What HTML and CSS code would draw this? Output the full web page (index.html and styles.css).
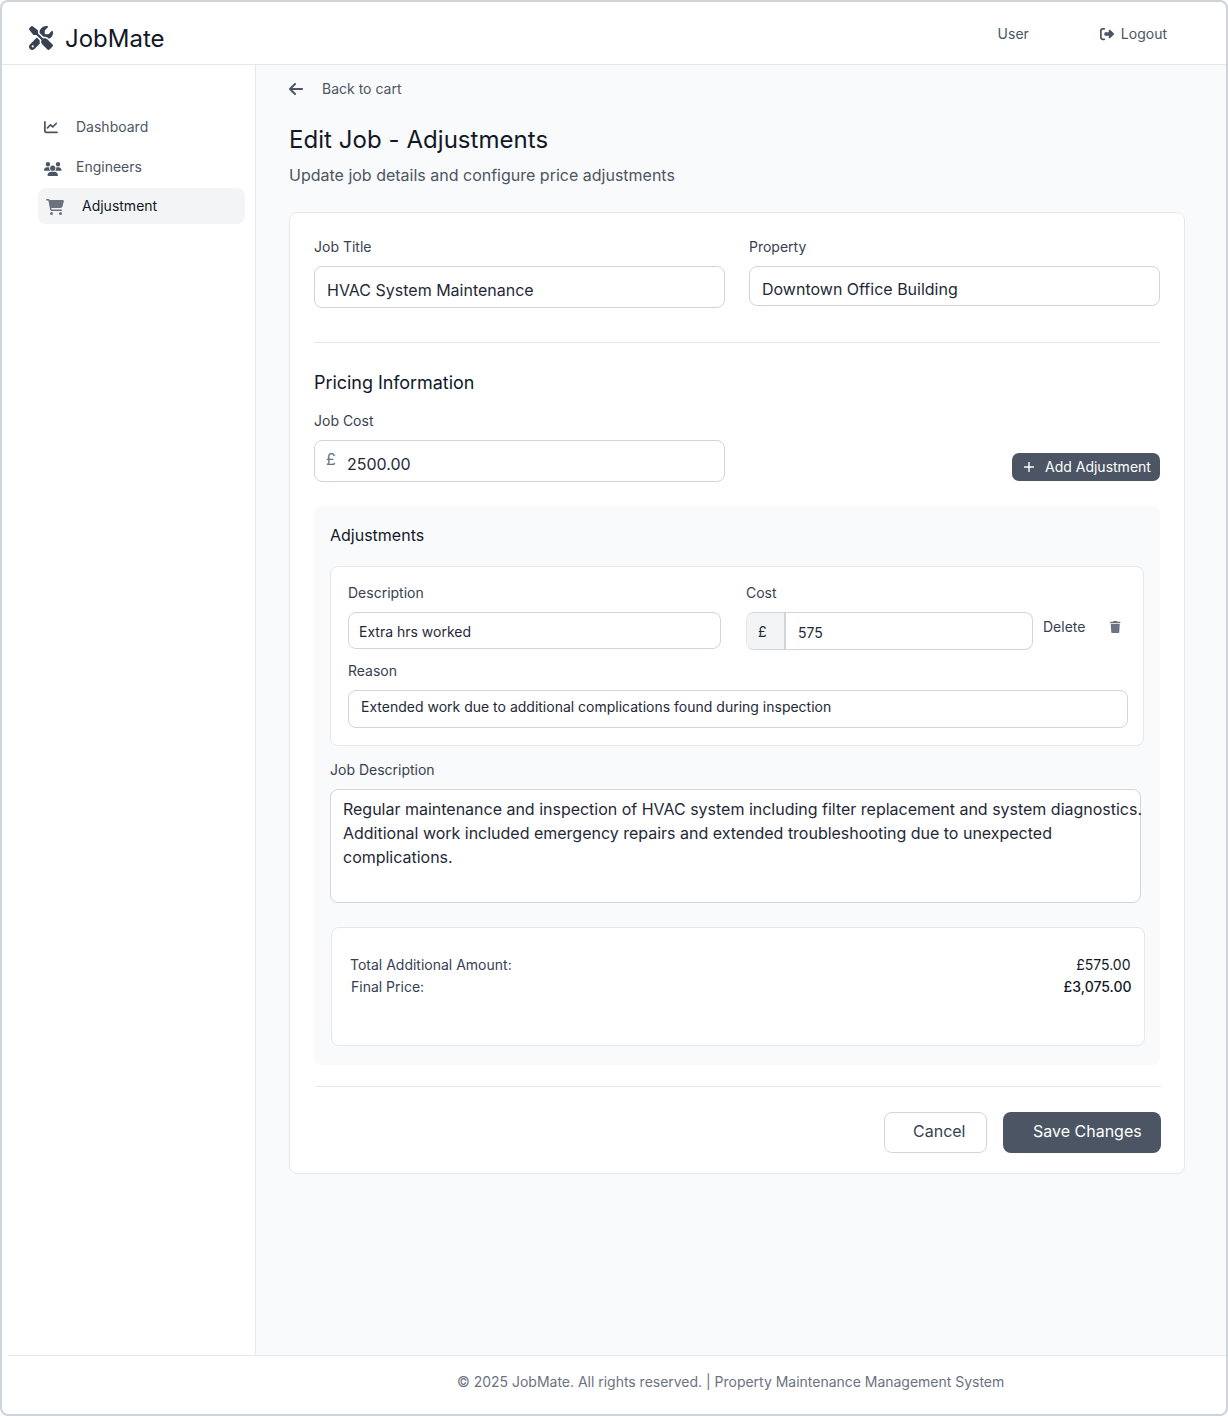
FILE: index.html
```html
<!DOCTYPE html>
<html lang="en">
<head>
<meta charset="utf-8">
<title>JobMate - Edit Job</title>
<link rel="stylesheet" href="styles.css">
</head>
<body>
<div class="app">
  <header class="header">
    <svg class="logo-icon" viewBox="0 0 512 512"><path d="M78.6 5C69.1-2.4 55.6-1.5 47 7L7 47c-8.5 8.5-9.4 22-2.1 31.6l80 104c4.5 5.9 11.6 9.4 19 9.4h54.1l109 109c-14.7 29-10 65.4 14.3 89.6l112 112c12.5 12.5 32.8 12.5 45.3 0l64-64c12.5-12.5 12.5-32.8 0-45.3l-112-112c-24.2-24.2-60.6-29-89.6-14.3l-109-109V104c0-7.5-3.5-14.5-9.4-19L78.6 5zM19.9 396.1C7.2 408.8 0 426.1 0 444.1C0 481.6 30.4 512 67.9 512c18 0 35.3-7.2 48-19.9L233.7 374.3c-7.8-20.9-9-43.6-3.6-65.1l-61.7-61.7L19.9 396.1zM512 144c0-10.5-1.1-20.7-3.2-30.5c-2.4-11.2-16.1-14.1-24.2-6l-63.9 63.9c-3 3-7.1 4.7-11.3 4.7H352c-8.8 0-16-7.2-16-16V102.6c0-4.2 1.7-8.3 4.7-11.3l63.9-63.9c8.1-8.1 5.2-21.8-6-24.2C388.7 1.1 378.5 0 368 0C288.5 0 224 64.5 224 144l0 .8 85.3 85.3c36-9.1 75.8 .5 104 28.7L429 274.5c49-23 83-72.8 83-130.5zM56 432a24 24 0 1 1 48 0 24 24 0 1 1 -48 0z"/></svg>
    <span class="logo-text">JobMate</span>
    <span class="user">User</span>
    <a class="logout">
      <svg class="logout-icon" viewBox="0 0 512 512"><path d="M377.9 105.9L500.7 228.7c7.2 7.2 11.3 17.1 11.3 27.3s-4.1 20.1-11.3 27.3L377.9 406.1c-6.4 6.4-15 9.9-24 9.9c-18.7 0-33.9-15.2-33.9-33.9l0-62.1-128 0c-17.7 0-32-14.3-32-32l0-64c0-17.7 14.3-32 32-32l128 0 0-62.1c0-18.7 15.2-33.9 33.9-33.9c9 0 17.6 3.6 24 9.9zM160 96L96 96c-17.7 0-32 14.3-32 32l0 256c0 17.7 14.3 32 32 32l64 0c17.7 0 32 14.3 32 32s-14.3 32-32 32l-64 0c-53 0-96-43-96-96L0 128C0 75 43 32 96 32l64 0c17.7 0 32 14.3 32 32s-14.3 32-32 32z"/></svg>
      <span>Logout</span>
    </a>
  </header>

  <div class="body">
    <nav class="sidebar">
      <a class="nav-item">
        <svg class="icon-chart" viewBox="0 0 512 512"><path d="M64 64c0-17.7-14.3-32-32-32S0 46.3 0 64V400c0 44.2 35.8 80 80 80H480c17.7 0 32-14.3 32-32s-14.3-32-32-32H80c-8.8 0-16-7.2-16-16V64zm406.6 86.6c12.5-12.5 12.5-32.8 0-45.3s-32.8-12.5-45.3 0L320 210.7l-57.4-57.4c-12.5-12.5-32.8-12.5-45.3 0l-112 112c-12.5 12.5-12.5 32.8 0 45.3s32.8 12.5 45.3 0L240 221.3l57.4 57.4c12.5 12.5 32.8 12.5 45.3 0l128-128z"/></svg>
        <span>Dashboard</span>
      </a>
      <a class="nav-item">
        <svg class="icon-users" viewBox="0 0 640 512"><path d="M144 0a80 80 0 1 1 0 160A80 80 0 1 1 144 0zM512 0a80 80 0 1 1 0 160A80 80 0 1 1 512 0zM0 298.7C0 239.8 47.8 192 106.7 192h42.7c15.9 0 31 3.5 44.6 9.7c-1.3 7.2-1.9 14.7-1.9 22.3c0 38.2 16.8 72.5 43.3 96c-.2 0-.4 0-.7 0H21.3C9.6 320 0 310.4 0 298.7zM405.3 320c-.2 0-.4 0-.7 0c26.6-23.5 43.3-57.8 43.3-96c0-7.6-.7-15-1.9-22.3c13.6-6.3 28.7-9.7 44.6-9.7h42.7C592.2 192 640 239.8 640 298.7c0 11.8-9.6 21.3-21.3 21.3H405.3zM224 224a96 96 0 1 1 192 0 96 96 0 1 1 -192 0zM128 485.3C128 411.7 187.7 352 261.3 352H378.7C452.3 352 512 411.7 512 485.3c0 14.7-11.9 26.7-26.7 26.7H154.7c-14.7 0-26.7-11.9-26.7-26.7z"/></svg>
        <span>Engineers</span>
      </a>
      <a class="nav-item nav-active">
        <svg class="icon-cart" viewBox="0 0 576 512"><path d="M0 24C0 10.7 10.7 0 24 0H69.5c22 0 41.5 12.8 50.6 32h411c26.3 0 45.5 25 38.6 50.4l-41 152.3c-8.5 31.4-37 53.3-69.5 53.3H170.7l5.4 28.5c2.2 11.3 12.1 19.5 23.6 19.5H488c13.3 0 24 10.7 24 24s-10.7 24-24 24H199.7c-34.6 0-64.3-24.6-70.7-58.5L77.4 54.5c-.7-3.8-4-6.5-7.9-6.5H24C10.7 48 0 37.3 0 24zM128 464a48 48 0 1 1 96 0 48 48 0 1 1 -96 0zm336-48a48 48 0 1 1 0 96 48 48 0 1 1 0-96z"/></svg>
        <span>Adjustment</span>
      </a>
    </nav>

    <main class="main">
      <a class="back">
        <svg class="icon-back" viewBox="0 0 448 512"><path d="M9.4 233.4c-12.5 12.5-12.5 32.8 0 45.3l160 160c12.5 12.5 32.8 12.5 45.3 0s12.5-32.8 0-45.3L109.2 288 416 288c17.7 0 32-14.3 32-32s-14.3-32-32-32l-306.7 0L214.6 118.6c12.5-12.5 12.5-32.8 0-45.3s-32.8-12.5-45.3 0l-160 160z"/></svg>
        <span>Back to cart</span>
      </a>
      <h1 class="title">Edit Job - Adjustments</h1>
      <p class="subtitle">Update job details and configure price adjustments</p>

      <section class="card">
        <div class="row">
          <div class="field">
            <div class="label">Job Title</div>
            <div class="input input-title">HVAC System Maintenance</div>
          </div>
          <div class="field">
            <div class="label">Property</div>
            <div class="input input-property">Downtown Office Building</div>
          </div>
        </div>

        <div class="pricing">
          <div class="field">
            <h2 class="section-title">Pricing Information</h2>
            <div class="label">Job Cost</div>
            <div class="input input-cost"><span class="currency">£</span><span class="amount">2500.00</span></div>
          </div>
          <button class="btn-add">
            <svg class="icon-plus" viewBox="0 0 10 10"><path d="M5 .5V9.5M.5 5H9.5"/></svg>
            <span>Add Adjustment</span>
          </button>
        </div>

        <div class="panel">
          <h3 class="panel-title">Adjustments</h3>
          <div class="adjustment">
            <div class="adjust-row">
              <div class="adjust-desc">
                <div class="label">Description</div>
                <div class="input-sm input-desc">Extra hrs worked</div>
              </div>
              <div class="adjust-cost">
                <div class="label">Cost</div>
                <div class="cost-group"><span class="addon">£</span><span class="cost-value">575</span></div>
              </div>
              <button class="btn-delete">
                <span>Delete</span>
                <svg class="icon-trash" viewBox="0 0 448 512"><path d="M135.2 17.7L128 32H32C14.3 32 0 46.3 0 64S14.3 96 32 96H416c17.7 0 32-14.3 32-32s-14.3-32-32-32H320l-7.2-14.3C307.4 6.8 296.3 0 284.2 0H163.8c-12.1 0-23.2 6.8-28.6 17.7zM416 128H32L53.2 467c1.6 25.3 22.6 45 47.9 45H346.9c25.3 0 46.3-19.7 47.9-45L416 128z"/></svg>
              </button>
            </div>
            <div class="label label-reason">Reason</div>
            <div class="input-sm input-reason">Extended work due to additional complications found during inspection</div>
          </div>

          <div class="label label-job">Job Description</div>
          <div class="textarea">Regular maintenance and inspection of HVAC system including filter replacement and system diagnostics.<br>Additional work included emergency repairs and extended troubleshooting due to unexpected<br>complications.</div>

          <div class="summary">
            <div class="summary-row"><span>Total Additional Amount:</span><span class="sum">£575.00</span></div>
            <div class="summary-row summary-final"><span>Final Price:</span><span class="sum sum-final">£3,075.00</span></div>
          </div>
        </div>

        <div class="actions">
          <button class="btn btn-cancel">Cancel</button>
          <button class="btn btn-save">Save Changes</button>
        </div>
      </section>
    </main>
  </div>

  <footer class="footer">© 2025 JobMate. All rights reserved. | Property Maintenance Management System</footer>
</div>
</body>
</html>
```
FILE: styles.css
```css
* { box-sizing: border-box; }

body {
  margin: 0;
  background: #fff;
  font-family: Inter, "Liberation Sans", sans-serif;
  font-size: 14px;
  line-height: 20px;
  color: #4b5563;
}

h1, h2, h3, p { margin: 0; font-weight: 400; }
svg { display: block; flex: none; fill: currentColor; }
button { font: inherit; margin: 0; padding: 0; border: 0; background: none; text-align: left; }

.app {
  display: flex;
  flex-direction: column;
  width: 1228px;
  height: 1416px;
  border: 2px solid #ced4da;
  border-radius: 8px;
  overflow: hidden;
  background: #fff;
}

/* Header */
.header {
  display: flex;
  align-items: flex-start;
  height: 63px;
  padding: 20px 59px 0 27px;
  border-bottom: 1px solid #e5e7eb;
}
.logo-icon { width: 24px; height: 24px; margin-top: 4px; color: #374151; }
.logo-text { margin: 1px 0 0 12px; font-size: 24px; line-height: 32px; color: #111827; }
.user { margin: 2px 0 0 auto; }
.logout { display: flex; gap: 7px; margin: 2px 0 0 71px; }
.logout-icon { width: 14px; height: 14px; margin-top: 3px; }

/* Sidebar */
.body { display: flex; height: 1290px; }
.sidebar {
  flex: none;
  width: 254px;
  padding: 52px 10px 0 36px;
  border-right: 1px solid #e5e7eb;
}
.nav-item { display: flex; height: 40px; padding-left: 6px; }
.icon-chart { width: 14px; height: 14px; margin: 3px 18px 0 0; }
.icon-users { width: 17.5px; height: 14px; margin: 5px 14.5px 0 0; }
.nav-active {
  height: 36px;
  margin-top: -9px;
  padding: 8px 0 0 8px;
  border-radius: 8px;
  background: #f3f4f6;
  color: #111827;
}
.icon-cart { width: 18px; height: 16px; margin: 3px 18px 0 0; color: #6b7280; }

/* Main column */
.main { flex: 1; padding: 14px 41px 0 33px; background: #f9fafb; }
.back { display: flex; gap: 19px; }
.icon-back { width: 14px; height: 16px; margin-top: 2px; }
.title { margin-top: 25px; font-size: 24px; line-height: 32px; letter-spacing: 0.05px; color: #111827; }
.subtitle { margin-top: 7px; font-size: 16px; line-height: 24px; }

.card {
  height: 962px;
  margin-top: 25px;
  padding: 24px;
  border: 1px solid #e5e7eb;
  border-radius: 8px;
  background: #fff;
}
.label { color: #374151; }
.row {
  display: flex;
  gap: 24px;
  height: 106px;
  border-bottom: 1px solid #e5e7eb;
}
.field { width: 411px; }
.input {
  margin-top: 9px;
  border: 1px solid #d1d5db;
  border-radius: 8px;
  font-size: 16px;
  line-height: 24px;
  color: #1f2937;
}
.input-title { height: 42px; padding: 11px 12px 0; }
.input-property { height: 40px; padding: 10px 12px 0; }

.pricing {
  display: flex;
  justify-content: space-between;
  height: 163px;
  padding-top: 26px;
}
.section-title { margin-bottom: 14px; font-size: 18px; line-height: 28px; letter-spacing: -0.05px; color: #111827; }
.input-cost { display: flex; height: 42px; padding: 6px 11px 0; }
.currency { width: 21px; color: #6b7280; }
.amount { margin-top: 5px; }
.btn-add {
  display: flex;
  width: 148px;
  height: 28px;
  margin-top: 84px;
  padding: 4px 0 0 12px;
  border-radius: 7px;
  background: #4b5563;
  color: #fff;
}
.icon-plus { width: 10px; height: 10px; margin: 5px 11px 0 0; fill: none; stroke: currentColor; stroke-width: 1.4; stroke-linecap: round; }

/* Adjustments panel */
.panel {
  height: 559px;
  padding: 17px 15px 0 16px;
  border-radius: 8px;
  background: #f9fafb;
}
.panel-title { font-size: 16px; line-height: 24px; color: #111827; }
.adjustment {
  width: 814px;
  height: 180px;
  margin-top: 19px;
  padding: 16px 15px 0 17px;
  border: 1px solid #e5e7eb;
  border-radius: 8px;
  background: #fff;
}
.adjust-row { display: flex; height: 78px; }
.adjust-desc { width: 373px; }
.adjust-cost { width: 287px; margin-left: 25px; }
.input-sm {
  border: 1px solid #d1d5db;
  border-radius: 8px;
  background: #fff;
  color: #1f2937;
}
.input-desc { height: 37px; margin-top: 9px; padding: 9px 10px 0; }
.cost-group {
  display: flex;
  height: 38px;
  margin-top: 9px;
  border: 1px solid #d1d5db;
  border-left-color: #e5e7eb;
  border-radius: 8px;
  overflow: hidden;
  color: #1f2937;
}
.addon { width: 39px; padding: 9px 0 0 11px; border-right: 2px solid #d1d5db; background: #f3f4f6; }
.cost-value { padding: 10px 0 0 12px; }
.btn-delete { display: flex; align-self: flex-start; gap: 25px; margin: 34px 0 0 10px; color: #374151; }
.icon-trash { width: 10.5px; height: 12px; margin-top: 4px; color: #6b7280; }
.input-reason { height: 38px; margin-top: 9px; padding: 6px 12px 0; }

.label-job { margin-top: 14px; }
.textarea {
  width: 811px;
  height: 114px;
  margin-top: 9px;
  padding: 7px 0 0 12px;
  border: 1px solid #d1d5db;
  border-radius: 8px;
  background: #fff;
  font-size: 16px;
  line-height: 24px;
  letter-spacing: -0.01px;
  color: #1f2937;
  white-space: nowrap;
}
.summary {
  height: 119px;
  margin: 24px 0 0 1px;
  padding: 27px 13px 0 18px;
  border: 1px solid #e5e7eb;
  border-radius: 8px;
  background: #fff;
}
.summary-row { display: flex; justify-content: space-between; height: 22px; color: #374151; }
.summary-final { padding-left: 1px; }
.sum { padding-right: 0.5px; color: #111827; }
.sum-final { padding: 0; margin-right: -0.5px; font-weight: 500; }

/* Form actions */
.actions {
  display: flex;
  justify-content: flex-end;
  gap: 16px;
  margin: 21px -1px 0 1px;
  padding-top: 25px;
  border-top: 1px solid #e5e7eb;
}
.btn { height: 41px; border-radius: 8px; font-size: 16px; line-height: 24px; }
.btn-cancel { width: 103px; padding: 0 0 3px 28px; border: 1px solid #d1d5db; background: #fff; color: #374151; }
.btn-save { width: 158px; padding: 0 0 3px 30px; background: #4b5563; color: #fff; }

.footer {
  height: 59px;
  margin-left: 6px;
  padding: 16px 0 0 449px;
  border-top: 1px solid #e5e7eb;
  letter-spacing: -0.015px;
  color: #6b7280;
}
```
